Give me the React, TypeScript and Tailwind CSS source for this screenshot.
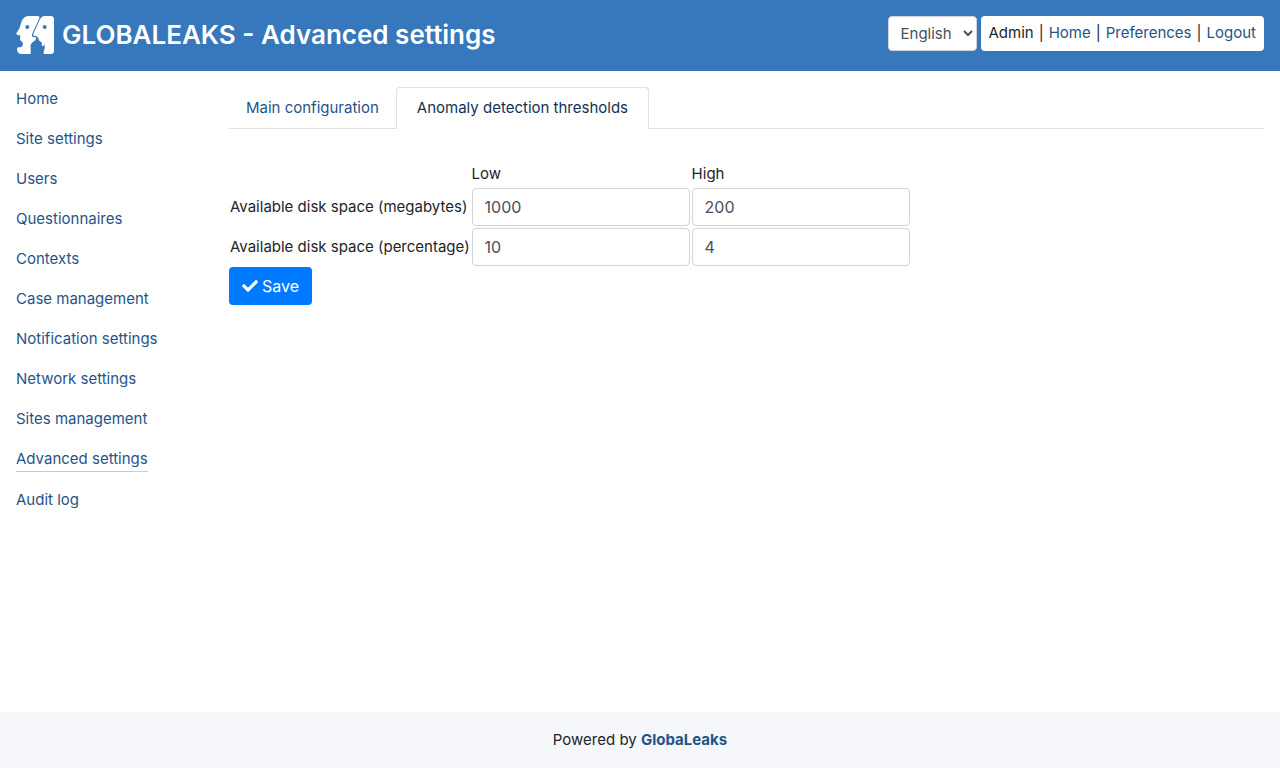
import { FaCheck } from "react-icons/fa";

const menu = [
  "Home",
  "Site settings",
  "Users",
  "Questionnaires",
  "Contexts",
  "Case management",
  "Notification settings",
  "Network settings",
  "Sites management",
  "Advanced settings",
  "Audit log",
];

const thresholds = [
  { label: "Available disk space (megabytes)", low: "1000", high: "200" },
  { label: "Available disk space (percentage)", low: "10", high: "4" },
];

function Logo() {
  return (
    <svg viewBox="0 0 114 114" className="size-[38px] shrink-0" aria-hidden="true">
      <path
        fill="#fff"
        d="M36 0H64Q73 0 70 7L48 55Q46 61 51 63L60 64Q62 70 56 74Q47 78 44 86V114H15Q5 113 3 101Q2 94 8 94Q18 95 21 86Q22 79 15 75Q10 72 13 63L12 58Q2 58 1 53Q1 50 5 46Q12 37 14 25Q19 2 36 0Z"
      />
      <path
        fill="#fff"
        d="M84 0H104Q114 0 114 10V104Q114 114 104 114H83V106Q89 96 85 84Q83 92 78 91L77 79Q67 74 67 65Q63 63 61 60L53 59Q50 58 52 54L69 16Q75 1 84 0Z"
      />
      <circle cx="34" cy="33" r="6" fill="#3777bc" />
      <circle cx="86" cy="33" r="6" fill="#3777bc" />
    </svg>
  );
}

export default function App() {
  return (
    <div className="flex min-h-screen flex-col bg-white font-['Metropolis','Inter',sans-serif] text-[15px] leading-6 text-[#212529]">
      <header className="flex items-start justify-between bg-[#3777bc] px-4 pt-4 pb-[17px]">
        <div className="flex items-center gap-2">
          <Logo />
          <h1 className="text-[26px] leading-[38px] font-semibold text-white">GLOBALEAKS - Advanced settings</h1>
        </div>
        <div className="flex gap-1">
          <select
            aria-label="Language"
            defaultValue="English"
            className="h-[35px] w-[89px] rounded border border-[#ced4da] bg-white pl-2 text-[#495057]"
          >
            <option>English</option>
          </select>
          <div className="flex h-[35px] gap-[5px] rounded bg-white px-2 pt-[5px]">
            <span>Admin</span>
            <span>|</span>
            <a href="#home" className="text-[#1f5489]">Home</a>
            <span>|</span>
            <a href="#preferences" className="text-[#1f5489]">Preferences</a>
            <span>|</span>
            <a href="#logout" className="text-[#1f5489]">Logout</a>
          </div>
        </div>
      </header>

      <div className="flex grow items-start">
        <nav className="w-[213px] shrink-0 px-4 pt-4">
          <ul className="flex flex-col gap-4">
            {menu.map((item) => (
              <li key={item} className="flex">
                <a
                  href="#section"
                  className={
                    item === "Advanced settings"
                      ? "border-b border-[#c5ccd3] text-[#1f5489]"
                      : "text-[#1f5489]"
                  }
                >
                  {item}
                </a>
              </li>
            ))}
          </ul>
        </nav>

        <main className="grow px-4 pt-4">
          <div role="tablist" className="flex border-b border-[#dee2e6]">
            <button role="tab" aria-selected="false" className="h-[41px] px-[17px] text-[#1f5489]">
              Main configuration
            </button>
            <button
              role="tab"
              aria-selected="true"
              className="-mb-px h-[42px] rounded-t border border-b-0 border-[#dee2e6] bg-white px-5 pb-px text-[#123252]"
            >
              Anomaly detection thresholds
            </button>
          </div>

          <form className="pt-[31px]">
            <table className="-mb-px -ml-px border-separate border-spacing-x-0.5 border-spacing-y-0.5">
              <thead>
                <tr>
                  <td />
                  <th scope="col" className="p-0 text-left font-normal">Low</th>
                  <th scope="col" className="p-0 text-left font-normal">High</th>
                </tr>
              </thead>
              <tbody>
                {thresholds.map((row) => (
                  <tr key={row.label}>
                    <th scope="row" className="w-[239px] p-0 text-left font-normal whitespace-nowrap">{row.label}</th>
                    {[row.low, row.high].map((value, i) => (
                      <td key={i} className="p-0">
                        <input
                          type="text"
                          aria-label={`${row.label} ${i === 0 ? "low" : "high"}`}
                          defaultValue={value}
                          className="block h-[38px] w-[218px] rounded border border-[#ced4da] bg-white px-3 text-base text-[#495057]"
                        />
                      </td>
                    ))}
                  </tr>
                ))}
              </tbody>
            </table>
            <button type="button" className="flex h-[38px] items-center gap-1 rounded bg-[#007bff] px-[13px] text-base text-white">
              <FaCheck className="size-4" />
              Save
            </button>
          </form>
        </main>
      </div>

      <footer className="bg-[#f5f7fb] p-4 text-center">
        Powered by <a href="#globaleaks" className="font-bold text-[#1f5489]">GlobaLeaks</a>
      </footer>
    </div>
  );
}
